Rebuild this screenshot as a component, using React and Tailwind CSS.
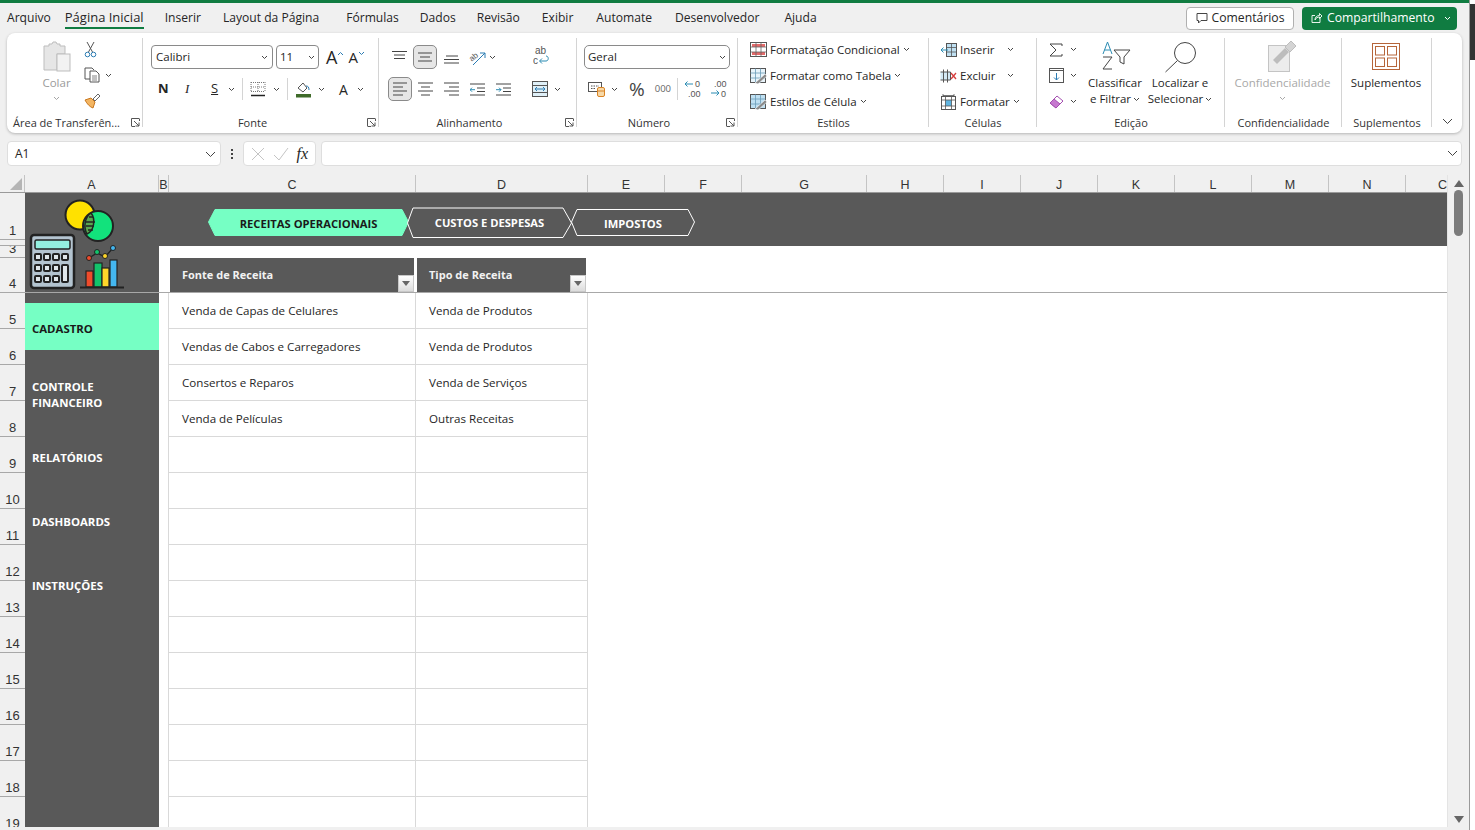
import React from 'react';

const tabs = [
  { label: 'Arquivo', cls: 'ml-[7px]' },
  { label: 'Página Inicial', cls: 'ml-[14px] text-[13px] font-medium border-b-2 border-[#107c41]' },
  { label: 'Inserir', cls: 'ml-[21px]' },
  { label: 'Layout da Página', cls: 'ml-[22px]' },
  { label: 'Fórmulas', cls: 'ml-[27px]' },
  { label: 'Dados', cls: 'ml-[21px]' },
  { label: 'Revisão', cls: 'ml-[21px]' },
  { label: 'Exibir', cls: 'ml-[22px]' },
  { label: 'Automate', cls: 'ml-[23px]' },
  { label: 'Desenvolvedor', cls: 'ml-[23px]' },
  { label: 'Ajuda', cls: 'ml-[25px]' },
];

const columns = [
  { label: 'A', cls: 'w-[134px]' },
  { label: 'B', cls: 'w-[10px]' },
  { label: 'C', cls: 'w-[247px]' },
  { label: 'D', cls: 'w-[172px]' },
  { label: 'E', cls: 'w-[77px]' },
  { label: 'F', cls: 'w-[77px]' },
  { label: 'G', cls: 'w-[125px]' },
  { label: 'H', cls: 'w-[77px]' },
  { label: 'I', cls: 'w-[77px]' },
  { label: 'J', cls: 'w-[77px]' },
  { label: 'K', cls: 'w-[77px]' },
  { label: 'L', cls: 'w-[77px]' },
  { label: 'M', cls: 'w-[77px]' },
  { label: 'N', cls: 'w-[77px]' },
  { label: 'C', cls: 'w-[41px] justify-end border-r-0' },
];

const rowHeaders = [
  { label: '1', cls: 'h-[47px]' },
  { label: '', cls: 'h-[6px]' },
  { label: '3', cls: 'h-[12px]' },
  { label: '4', cls: 'h-[35px]' },
  ...[5, 6, 7, 8, 9, 10, 11, 12, 13, 14, 15, 16, 17, 18, 19].map((n) => ({ label: String(n), cls: 'h-[36px]' })),
];

const rows = [
  ['Venda de Capas de Celulares', 'Venda de Produtos'],
  ['Vendas de Cabos e Carregadores', 'Venda de Produtos'],
  ['Consertos e Reparos', 'Venda de Serviços'],
  ['Venda de Películas', 'Outras Receitas'],
  ...Array.from({ length: 11 }, () => ['', '']),
];

function Chev({ className = '', color = '#444' }) {
  return (
    <svg width="7" height="5" viewBox="0 0 7 5" className={className}>
      <path d="M1 1l2.5 2.5L6 1" fill="none" stroke={color} strokeWidth="1" />
    </svg>
  );
}

function Lines({ rows: lineRows, color = '#444' }) {
  // small stacks of horizontal strokes, used by the alignment buttons
  return (
    <svg width="16" height="16" viewBox="0 0 16 16">
      {lineRows.map(([x1, x2, y], i) => (
        <path key={i} d={`M${x1} ${y}H${x2}`} stroke={color} strokeWidth="1" />
      ))}
    </svg>
  );
}

function Group({ label, cls, children, launcher, border = true }) {
  return (
    <div className={`relative h-full ${cls}`}>
      <div className="h-[80px]">{children}</div>
      <div className={`text-center text-[11px] leading-[20px] text-[#333] ${launcher ? 'pr-[17px]' : ''}`}>{label}</div>
      {launcher && (
        <svg width="9" height="9" viewBox="0 0 9 9" className="absolute right-[3px] bottom-[6px]">
          <path d="M.5 8V.5H8M3 3l5 5M4.5 8H8V4.5M.5 8.5H4M8.5.5V3" fill="none" stroke="#555" strokeWidth="1" />
        </svg>
      )}
      {border && <div className="absolute right-0 top-[5px] bottom-[6px] w-px bg-[#d4d4d4]" />}
    </div>
  );
}

function ClipboardIcon() {
  return (
    <svg width="28" height="31" viewBox="0 0 28 31">
      <path d="M1 5h5V3h3l1-2h3l1 2h3v2h5v8H14v16H1z" fill="#e6e6e6" stroke="#bdbdbd" />
      <rect x="14" y="13" width="13" height="17" fill="#f2f2f2" stroke="#bdbdbd" />
    </svg>
  );
}

function CutIcon() {
  return (
    <svg width="13" height="17" viewBox="0 0 13 17">
      <path d="M3 1l5.5 10M10 1L4.500 11" stroke="#555" fill="none" />
      <circle cx="3.500" cy="13.500" r="2.300" fill="none" stroke="#2b7cb3" />
      <circle cx="9.500" cy="13.500" r="2.300" fill="none" stroke="#2b7cb3" />
    </svg>
  );
}

function CopyIcon() {
  return (
    <svg width="17" height="16" viewBox="0 0 17 16">
      <path d="M6 12H1V1h7l2 2" fill="none" stroke="#555" />
      <path d="M6 4h6l3 3v8H6z" fill="#fff" stroke="#555" />
      <path d="M8 9h5M8 11h5M8 13h5" stroke="#666" strokeWidth=".8" />
    </svg>
  );
}

function PainterIcon() {
  return (
    <svg width="17" height="17" viewBox="0 0 17 17">
      <path d="M1 8l6-2 4 4-2 6C6 15 3 12 1 8z" fill="#f3b562" stroke="#c9771e" />
      <path d="M9 7l5-5 2 2-5 5z" fill="#fff" stroke="#666" />
    </svg>
  );
}

function BordersIcon() {
  return (
    <svg width="16" height="16" viewBox="0 0 16 16">
      <path d="M1 1.500h14M1 6h14M8 1v10M1 1v10M15 1v10" stroke="#777" strokeDasharray="1 1" fill="none" />
      <path d="M1 10.500h14" stroke="#777" strokeDasharray="1 1" />
      <path d="M1 14.500h14" stroke="#222" strokeWidth="1.500" />
    </svg>
  );
}

function FillIcon() {
  return (
    <svg width="17" height="17" viewBox="0 0 17 17">
      <path d="M3 7l5-5 4 5-4 4z" fill="#fff" stroke="#555" />
      <path d="M11 5c2 0 3 1 3 4" stroke="#2b7cb3" fill="none" />
      <rect x="1" y="13" width="15" height="3.500" fill="#3f6b2a" />
    </svg>
  );
}

function OrientIcon() {
  return (
    <svg width="20" height="17" viewBox="0 0 20 17" className="overflow-visible">
      <path d="M6 16L18 4M13 4h5v5" stroke="#2b7cb3" fill="none" />
      <text x="2" y="11" fontSize="8" fill="#555" fontFamily="Liberation Sans" transform="rotate(-40 6 8)">ab</text>
    </svg>
  );
}

function WrapIcon() {
  return (
    <svg width="17" height="20" viewBox="0 0 17 20" fontFamily="Liberation Sans">
      <text x="2" y="8" fontSize="10" fill="#555">ab</text>
      <text x="0" y="18" fontSize="10" fill="#555">c</text>
      <path d="M7 15h6c3 0 3-5 0-5M9 12.500L6.500 15 9 17.500" fill="none" stroke="#2b8cb3" />
    </svg>
  );
}

function MergeIcon() {
  return (
    <svg width="16" height="16" viewBox="0 0 16 16">
      <rect x=".5" y=".5" width="15" height="15" fill="#dff0f8" stroke="#555" />
      <path d="M.5 4.500h15M.5 11.500h15" stroke="#555" />
      <path d="M3 8h10M5 6L3 8l2 2M11 6l2 2-2 2" fill="none" stroke="#2b7cb3" />
    </svg>
  );
}

function IndentIcon({ flip }) {
  return (
    <svg width="15" height="13" viewBox="0 0 15 13">
      <path d="M0 1h15M7 5h8M7 8.500h8M0 12h15" stroke="#444" />
      <path d={flip ? 'M0 6.700h5M3 4.700l2 2-2 2' : 'M0 6.700h5M2 4.700l-2 2 2 2'} fill="none" stroke="#2b8cb3" />
    </svg>
  );
}

function AccountIcon() {
  return (
    <svg width="17" height="16" viewBox="0 0 17 16">
      <rect x=".5" y="1.500" width="13" height="9" fill="#fff" stroke="#555" />
      <path d="M3 5h8M3 7.500h5" stroke="#555" strokeDasharray="1.500 1" />
      <rect x="9.500" y="6.500" width="7" height="9" rx="1.500" fill="#f7d9a8" stroke="#d98324" />
      <path d="M9.500 10h7" stroke="#d98324" />
    </svg>
  );
}

function DecimalIcon({ more }) {
  return (
    <svg width="17" height="20" viewBox="0 0 17 20" fontFamily="Liberation Sans" fontSize="9" fill="#555">
      {more ? (
        <>
          <text x="4" y="8">.00</text>
          <text x="11" y="18">0</text>
          <path d="M1 14h8M6.500 11.500L9 14l-2.500 2.500" fill="none" stroke="#2b8cb3" />
        </>
      ) : (
        <>
          <text x="11" y="8">0</text>
          <text x="4" y="18">.00</text>
          <path d="M9 5H1M3.500 2.500L1 5l2.500 2.500" fill="none" stroke="#2b8cb3" />
        </>
      )}
    </svg>
  );
}

function CondIcon() {
  return (
    <svg width="17" height="15" viewBox="0 0 17 15">
      <rect x=".5" y=".5" width="16" height="14" fill="#fff" stroke="#555" />
      <rect x="2" y="2" width="13" height="3" fill="#e56a6a" />
      <rect x="2" y="10" width="13" height="3" fill="#e56a6a" />
      <path d="M.5 5h16M.5 10h16M6 .5v14M11 .5v14" stroke="#666" strokeWidth=".8" />
    </svg>
  );
}

function TableFmtIcon({ solid }) {
  return (
    <svg width="17" height="16" viewBox="0 0 17 16">
      <rect x=".5" y=".5" width="15" height="14" fill={solid ? '#bfe0f2' : '#e8f4fb'} stroke="#555" />
      <path d="M.5 5h15M.5 10h15M5.500 .5v14M10.500 .5v14" stroke="#6b9cb8" strokeWidth=".8" />
      <path d="M5 15l10-9 2 2-9 8z" fill="#8a8a8a" stroke="#fff" strokeWidth=".6" />
    </svg>
  );
}

function InsertIcon() {
  return (
    <svg width="17" height="14" viewBox="0 0 17 14">
      <rect x="6.500" y=".5" width="10" height="13" fill="#bfe0f2" stroke="#555" />
      <path d="M6.500 4.500h10M6.500 9h10M11.500 .5v13" stroke="#555" strokeWidth=".8" />
      <path d="M8 7H1M3.500 4.500L1 7l2.500 2.500" fill="none" stroke="#2b8cb3" />
    </svg>
  );
}

function DeleteIcon() {
  return (
    <svg width="17" height="14" viewBox="0 0 17 14">
      <path d="M.5 3h10v8H.5M3.500 .5v13M7.500 .5v13" fill="#d3e9f5" stroke="#555" />
      <path d="M11 4l5 6M16 4l-5 6" stroke="#d63c3c" strokeWidth="1.300" />
    </svg>
  );
}

function FormatIcon() {
  return (
    <svg width="17" height="17" viewBox="0 0 17 17">
      <rect x="1.500" y="3.500" width="14" height="13" fill="#fff" stroke="#555" />
      <rect x="5.500" y="7" width="6" height="6" fill="#5fb4e0" />
      <path d="M1.500 7h14M1.500 13h14M5.500 3.500v13M11.500 3.500v13" stroke="#555" strokeWidth=".8" />
      <path d="M3 2.500h11M3 1v3M14 1v3" stroke="#555" strokeWidth=".8" />
    </svg>
  );
}

function SumIcon() {
  return (
    <svg width="14" height="14" viewBox="0 0 14 14">
      <path d="M13 3V1H1l6 6-6 6h12v-2" fill="none" stroke="#444" />
    </svg>
  );
}

function FillDownIcon() {
  return (
    <svg width="15" height="15" viewBox="0 0 15 15">
      <rect x=".5" y=".5" width="14" height="14" fill="#fff" stroke="#555" />
      <path d="M.5 2.500h14" stroke="#555" />
      <path d="M7.500 5v7M5 9.500l2.500 2.500L10 9.500" fill="none" stroke="#2b7cb3" />
    </svg>
  );
}

function EraserIcon() {
  return (
    <svg width="15" height="15" viewBox="0 0 15 15">
      <path d="M1 9l7-7 6 5-7 7z" fill="#fff" stroke="#a44fb0" />
      <path d="M1 9l4-4 6 5-4 4z" fill="#c678cf" stroke="#a44fb0" />
    </svg>
  );
}

function SortIcon() {
  return (
    <svg width="31" height="29" viewBox="0 0 31 29">
      <path d="M3 13L7.500 1 12 13M4.500 9h6" fill="none" stroke="#2b8cb3" />
      <path d="M3 16h9L3 28h9" fill="none" stroke="#444" />
      <path d="M14 9h16l-6 7v7l-4-2v-5z" fill="none" stroke="#444" />
    </svg>
  );
}

function SearchIcon() {
  return (
    <svg width="33" height="32" viewBox="0 0 33 32">
      <circle cx="21" cy="12" r="10.500" fill="none" stroke="#444" />
      <path d="M13.500 19.500L1.500 31" stroke="#444" />
    </svg>
  );
}

function SensitivityIcon() {
  return (
    <svg width="29" height="32" viewBox="0 0 29 32">
      <rect x=".5" y="5.500" width="21" height="26" fill="#ececec" stroke="#c4c4c4" />
      <path d="M5 20L17 8l4 4L9 24z" fill="#bdbdbd" />
      <path d="M17 7l6-6 5 5-6 6z" fill="#d4d4d4" stroke="#bdbdbd" />
    </svg>
  );
}

function AddinIcon() {
  return (
    <svg width="28" height="27" viewBox="0 0 28 27">
      <rect x=".5" y=".5" width="27" height="26" fill="#fff" stroke="#b5653a" />
      <rect x="3.500" y="3.500" width="9" height="8.500" fill="none" stroke="#b5653a" />
      <rect x="15.500" y="3.500" width="9" height="8.500" fill="none" stroke="#b5653a" />
      <rect x="3.500" y="15" width="9" height="8.500" fill="none" stroke="#b5653a" />
      <rect x="15.500" y="15" width="9" height="8.500" fill="none" stroke="#b5653a" />
    </svg>
  );
}

function Logo() {
  return (
    <svg width="105" height="100" viewBox="25 195 105 100">
      <circle cx="80" cy="215" r="14.500" fill="#ffe100" stroke="#222" strokeWidth="2" />
      <circle cx="98" cy="226" r="15" fill="#12e27c" stroke="#222" strokeWidth="2" />
      <path d="M91 213c-6 4-8 14-4 21 7-3 9-15 4-21z" fill="#5aa650" stroke="#222" strokeWidth="1.500" />
      <path d="M86 222h9M86 226h8M88 230h5M89 217h4" stroke="#222" strokeWidth="1.300" />
      <rect x="31" y="235" width="43" height="53" rx="3" fill="#b4c4d0" stroke="#222" strokeWidth="2.500" />
      <rect x="35" y="240" width="35" height="9" rx="1.500" fill="#93efe0" stroke="#222" strokeWidth="1.500" />
      {[254, 265, 276].map((y) =>
        [35, 44, 53].map((x) => <rect key={`${x}-${y}`} x={x} y={y} width="6" height="6" rx="1" fill="#dfe6ea" stroke="#222" strokeWidth="2" />),
      )}
      <rect x="62" y="254" width="6" height="6" rx="1" fill="#dfe6ea" stroke="#222" strokeWidth="2" />
      <rect x="62" y="265" width="6" height="17" rx="1" fill="#dfe6ea" stroke="#222" strokeWidth="2" />
      <rect x="86" y="271" width="7" height="16" fill="#ee4b2b" stroke="#222" strokeWidth="1.200" />
      <rect x="94" y="263" width="8" height="24" fill="#12c46b" stroke="#222" strokeWidth="1.200" />
      <rect x="102" y="268" width="7" height="19" fill="#ffd62a" stroke="#222" strokeWidth="1.200" />
      <rect x="110" y="260" width="7" height="27" fill="#44b7f0" stroke="#222" strokeWidth="1.200" />
      <path d="M80 287.500h44" stroke="#222" strokeWidth="2" />
      <path d="M89 258l8-5 8 4 8-9" fill="none" stroke="#222" strokeWidth="1.300" />
      <circle cx="89" cy="258" r="2.500" fill="#ee4b2b" stroke="#222" />
      <circle cx="97" cy="252" r="2.500" fill="#12c46b" stroke="#222" />
      <circle cx="105" cy="256" r="2.500" fill="#ffd62a" stroke="#222" />
      <circle cx="113" cy="248" r="2.500" fill="#44b7f0" stroke="#222" />
    </svg>
  );
}

function ChevronTab({ cls, label, active, points, viewBox, width, height }) {
  return (
    <div className={`relative flex items-center justify-center ${cls}`}>
      <svg width={width} height={height} viewBox={viewBox} className="absolute left-0 top-0">
        <polygon points={points} fill={active ? '#76ffc4' : '#595959'} stroke={active ? '#76ffc4' : '#fff'} />
      </svg>
      <span className={`relative text-[11.2px] font-bold ${active ? 'text-[#1a1a1a]' : 'text-white'}`}>{label}</span>
    </div>
  );
}

function FilterButton() {
  return (
    <div className="absolute right-0 bottom-0 flex h-[17px] w-[16px] items-center justify-center border border-[#c8c8c8] bg-gradient-to-b from-white to-[#dcdcdc]">
      <svg width="8" height="5" viewBox="0 0 8 5">
        <path d="M0 0h8L4 5z" fill="#666" />
      </svg>
    </div>
  );
}

export default function App() {
  return (
    <div className="flex h-[830px] w-[1475px] overflow-hidden bg-[#f0f0f0] font-['Open_Sans',sans-serif] text-[#262626]">
      <div className="flex h-full w-[1470px] flex-col border-r border-[#9a9a9a]">
        <div className="h-[3px] bg-[#107c41]" />

        {/* tab row */}
        <div className="flex h-[30px] items-center text-[12.1px]">
          {tabs.map((tab) => (
            <div key={tab.label} className={`leading-[20px] ${tab.cls}`}>{tab.label}</div>
          ))}
          <div className="ml-auto flex items-center gap-[8px] pr-[12px] text-[12.2px]">
            <div className="flex h-[23px] w-[108px] items-center justify-center gap-[4px] rounded-[4px] border border-[#b0b0b0] bg-white">
              <svg width="12" height="12" viewBox="0 0 12 12">
                <path d="M1 1.500h10v7H5L2.500 11V8.500H1z" fill="none" stroke="#444" />
              </svg>
              Comentários
            </div>
            <div className="flex h-[23px] w-[155px] items-center gap-[4px] rounded-[4px] bg-[#107c41] pl-[9px] text-white">
              <svg width="12" height="12" viewBox="0 0 12 12">
                <path d="M9 5.500v5H1v-7h3M4 8c0-3 2-4.500 4.500-4.500V1.500L11 4 8.500 6.500V5C6.500 5 5 6 4 8z" fill="none" stroke="#fff" strokeWidth=".9" />
              </svg>
              Compartilhamento
              <Chev className="ml-auto mr-[6px]" color="#fff" />
            </div>
          </div>
        </div>

        {/* ribbon */}
        <div className="ml-[7px] flex h-[100px] w-[1455px] rounded-lg bg-white shadow-[0_1px_3px_rgba(0,0,0,0.25)]">
          <Group label="Área de Transferên..." cls="w-[136px]" launcher>
            <div className="flex pl-[29px] pt-[8px]">
              <div className="flex w-[41px] flex-col items-center">
                <ClipboardIcon />
                <span className="mt-[2px] text-[11.5px] text-[#9b9b9b]">Colar</span>
                <Chev className="mt-[5px]" color="#a5a5a5" />
              </div>
              <div className="ml-[7px] flex flex-col gap-[9px]">
                <CutIcon />
                <div className="flex items-center gap-[4px]"><CopyIcon /><Chev /></div>
                <PainterIcon />
              </div>
            </div>
          </Group>

          <Group label="Fonte" cls="w-[236px]" launcher>
            <div className="flex items-center pl-[8px] pt-[12px]">
              <div className="flex h-[24px] w-[122px] items-center justify-between rounded-[4px] border border-[#8a8a8a] px-[4px] text-[11.5px]">Calibri<Chev /></div>
              <div className="ml-[3px] flex h-[24px] w-[43px] items-center justify-between rounded-[4px] border border-[#8a8a8a] px-[3px] text-[11.5px]">11<Chev /></div>
              <span className="ml-[7px] text-[18px] leading-none">A</span>
              <Chev className="-mt-[8px] rotate-180" color="#2b7cb3" />
              <span className="ml-[4px] text-[15px] leading-none">A</span>
              <Chev className="-mt-[8px]" color="#2b7cb3" />
            </div>
            <div className="mt-[9px] flex h-[22px] items-center text-[13px]">
              <span className="ml-[15px] w-[27px] font-bold">N</span>
              <span className="w-[26px] font-['Liberation_Serif',serif] italic">I</span>
              <span className="w-[17px] underline">S</span>
              <Chev />
              <div className="mx-[7px] h-[22px] w-px bg-[#d4d4d4]" />
              <BordersIcon />
              <Chev className="ml-[7px]" />
              <div className="mx-[7px] h-[22px] w-px bg-[#d4d4d4]" />
              <FillIcon />
              <Chev className="ml-[6px]" />
              <span className="ml-[14px] text-[14px]">A</span>
              <Chev className="ml-[9px]" />
            </div>
          </Group>

          <Group label="Alinhamento" cls="w-[198px]" launcher>
            <div className="flex items-center pl-[9px] pt-[12px]">
              <div className="flex h-[24px] w-[24px] items-center justify-center"><Lines rows={[[0, 15, 2.5], [2, 13, 6], [2, 13, 9.5]]} /></div>
              <div className="ml-[1px] flex h-[24px] w-[24px] items-center justify-center rounded-[5px] border border-[#8a8a8a] bg-[#e6e6e6]"><Lines rows={[[1, 15, 4], [3, 13, 8], [1, 15, 12]]} /></div>
              <div className="ml-[3px] flex h-[24px] w-[24px] items-center justify-center"><Lines rows={[[2, 14, 7], [0, 15, 10.5], [0, 15, 14]]} /></div>
              <div className="ml-[3px]"><OrientIcon /></div>
              <Chev className="ml-[2px]" />
              <div className="ml-[37px] -mt-[2px]"><WrapIcon /></div>
            </div>
            <div className="mt-[8px] flex items-center pl-[9px]">
              <div className="flex h-[24px] w-[24px] items-center justify-center rounded-[5px] border border-[#8a8a8a] bg-[#e6e6e6]"><Lines rows={[[1, 15, 2], [1, 11, 6], [1, 15, 10], [1, 11, 14]]} /></div>
              <div className="ml-[6px]"><Lines rows={[[0, 15, 2], [3, 12, 6], [0, 15, 10], [3, 12, 14]]} /></div>
              <div className="ml-[10px]"><Lines rows={[[0, 15, 2], [5, 15, 6], [0, 15, 10], [5, 15, 14]]} /></div>
              <div className="ml-[10px]"><IndentIcon /></div>
              <div className="ml-[11px]"><IndentIcon flip /></div>
              <div className="ml-[21px]"><MergeIcon /></div>
              <Chev className="ml-[6px]" />
            </div>
          </Group>

          <Group label="Número" cls="w-[161px]" launcher>
            <div className="pl-[7px] pt-[12px]">
              <div className="flex h-[24px] w-[146px] items-center justify-between rounded-[5px] border border-[#8a8a8a] px-[3px] text-[11.5px]">Geral<Chev /></div>
            </div>
            <div className="mt-[9px] flex h-[22px] items-center pl-[11px]">
              <AccountIcon />
              <Chev className="ml-[6px]" />
              <span className="ml-[11px] text-[19px] leading-none text-[#444]">%</span>
              <span className="ml-[10px] text-[9.5px] text-[#666]">000</span>
              <div className="ml-[6px] h-[22px] w-px bg-[#d4d4d4]" />
              <div className="ml-[6px]"><DecimalIcon /></div>
              <div className="ml-[9px]"><DecimalIcon more /></div>
            </div>
          </Group>

          <Group label="Estilos" cls="w-[191px]">
            <div className="flex flex-col gap-[9px] pl-[12px] pt-[8px] text-[11.5px]">
              <div className="flex h-[17px] items-center gap-[3px]"><CondIcon />Formatação Condicional<Chev /></div>
              <div className="flex h-[17px] items-center gap-[3px]"><TableFmtIcon />Formatar como Tabela<Chev /></div>
              <div className="flex h-[17px] items-center gap-[3px]"><TableFmtIcon solid />Estilos de Célula<Chev /></div>
            </div>
          </Group>

          <Group label="Células" cls="w-[108px]">
            <div className="flex flex-col gap-[9px] pl-[11px] pt-[8px] text-[11.5px]">
              <div className="flex h-[17px] items-center gap-[3px]"><InsertIcon />Inserir<Chev className="ml-[9px]" /></div>
              <div className="flex h-[17px] items-center gap-[3px]"><DeleteIcon />Excluir<Chev className="ml-[9px]" /></div>
              <div className="flex h-[17px] items-center gap-[3px]"><FormatIcon />Formatar<Chev /></div>
            </div>
          </Group>

          <Group label="Edição" cls="w-[188px]">
            <div className="flex pl-[12px] pt-[8px] text-[11.5px] leading-[16px]">
              <div className="flex w-[34px] flex-col gap-[9px]">
                <div className="flex h-[17px] items-center gap-[7px]"><SumIcon /><Chev /></div>
                <div className="flex h-[17px] items-center gap-[6px]"><FillDownIcon /><Chev /></div>
                <div className="flex h-[17px] items-center gap-[6px]"><EraserIcon /><Chev /></div>
              </div>
              <div className="flex w-[64px] flex-col items-center">
                <SortIcon />
                <span className="mt-[5px]">Classificar</span>
                <span className="flex items-center gap-[2px]">e Filtrar<Chev /></span>
              </div>
              <div className="flex w-[66px] flex-col items-center">
                <SearchIcon />
                <span className="mt-[2px]">Localizar e</span>
                <span className="flex items-center gap-[2px]">Selecionar<Chev /></span>
              </div>
            </div>
          </Group>

          <Group label="Confidencialidade" cls="w-[117px]">
            <div className="flex flex-col items-center pt-[7px] pr-[2px] text-[11.5px] text-[#a8a8a8]">
              <SensitivityIcon />
              <span className="mt-[3px] leading-[16px]">Confidencialidade</span>
              <Chev className="mt-[5px]" color="#a8a8a8" />
            </div>
          </Group>

          <Group label="Suplementos" cls="w-[90px]">
            <div className="flex flex-col items-center pt-[10px] pr-[2px] text-[11.5px]">
              <AddinIcon />
              <span className="mt-[5px] leading-[16px]">Suplementos</span>
            </div>
          </Group>

          <div className="flex flex-1 items-end justify-center pb-[8px]">
            <svg width="11" height="7" viewBox="0 0 11 7">
              <path d="M1 1l4.500 4.500L10 1" fill="none" stroke="#444" />
            </svg>
          </div>
        </div>

        {/* formula bar */}
        <div className="ml-[7px] mt-[8px] flex h-[25px] items-center">
          <div className="flex h-full w-[214px] items-center justify-between rounded-[4px] border border-[#dedede] bg-white pl-[7px] pr-[4px] pt-[1px] text-[12px]">
            A1
            <svg width="11" height="7" viewBox="0 0 11 7"><path d="M1 1l4.500 4.500L10 1" fill="none" stroke="#444" /></svg>
          </div>
          <div className="flex w-[22px] flex-col items-center gap-[2px]">
            <span className="h-[2px] w-[2px] bg-[#444]" />
            <span className="h-[2px] w-[2px] bg-[#444]" />
            <span className="h-[2px] w-[2px] bg-[#444]" />
          </div>
          <div className="flex h-full w-[73px] items-center justify-around rounded-[4px] border border-[#dedede] bg-white px-[3px]">
            <svg width="14" height="14" viewBox="0 0 14 14"><path d="M1 1l12 12M13 1L1 13" stroke="#c4c4c4" /></svg>
            <svg width="16" height="14" viewBox="0 0 16 14"><path d="M1 8l5 5L15 1" fill="none" stroke="#c4c4c4" /></svg>
            <span className="font-['Liberation_Serif',serif] text-[16px] italic leading-none">fx</span>
          </div>
          <div className="ml-[5px] flex h-full w-[1141px] items-center justify-end rounded-[4px] border border-[#dedede] bg-white pr-[3px]">
            <svg width="11" height="7" viewBox="0 0 11 7"><path d="M1 1l4.500 4.500L10 1" fill="none" stroke="#444" /></svg>
          </div>
        </div>

        {/* sheet */}
        <div className="mt-[9px] flex h-[652px] flex-col overflow-hidden">
          <div className="flex h-[17px] shrink-0 font-['Liberation_Sans',sans-serif] text-[12.5px] text-[#333]">
            <div className="flex w-[25px] items-end justify-end border-r border-[#c4c4c4] pb-[2px] pr-[2px]">
              <svg width="12" height="12" viewBox="0 0 12 12"><path d="M12 0v12H0z" fill="#b5b5b5" /></svg>
            </div>
            {columns.map((col, i) => (
              <div key={i} className={`flex items-center justify-center border-r border-[#c4c4c4] pt-[3px] ${col.cls}`}>{col.label}</div>
            ))}
          </div>

          <div className="relative flex h-[635px] border-t border-[#9a9a9a]">
            <div className="w-[25px] shrink-0 overflow-hidden font-['Liberation_Sans',sans-serif] text-[13px] leading-[15px] text-[#333]">
              {rowHeaders.map((row, i) => (
                <div key={i} className={`flex items-end justify-center overflow-hidden border-b border-[#a8a8a8] pb-[1px] ${row.cls}`}>{row.label}</div>
              ))}
            </div>

            {/* nav column */}
            <div className="flex w-[134px] shrink-0 flex-col bg-[#595959] text-[11.4px] font-bold text-white">
              <div className="h-[110px] shrink-0 pt-[2px]"><Logo /></div>
              <div className="flex h-[47px] items-center bg-[#76ffc4] pl-[7px] pt-[4px] text-[#1a1a1a]">CADASTRO</div>
              <div className="mt-[29px] pl-[7px] leading-[16px]">CONTROLE<br />FINANCEIRO</div>
              <div className="mt-[39px] pl-[7px] leading-[16px]">RELATÓRIOS</div>
              <div className="mt-[48px] pl-[7px] leading-[16px]">DASHBOARDS</div>
              <div className="mt-[48px] pl-[7px] leading-[16px]">INSTRUÇÕES</div>
            </div>

            <div className="flex w-[1288px] shrink-0 flex-col bg-white">
              <div className="flex h-[53px] shrink-0 bg-[#595959] pt-[14px]">
                <ChevronTab cls="ml-[49px] h-[30px] w-[201px] pt-[4px]" label="RECEITAS OPERACIONAIS" active width={201} height={30} viewBox="0 0 201 30" points="0.5,15 7,2.500 194,2.500 200.500,15 194,28.500 7,28.500" />
                <ChevronTab cls="-ml-[2px] h-[32px] w-[165px]" label="CUSTOS E DESPESAS" width={165} height={32} viewBox="0 0 165 32" points="0.500,16 6,1 156,1 164.500,16 156,30.500 6,30.500" />
                <ChevronTab cls="-ml-[1px] h-[30px] w-[124px] pt-[4px]" label="IMPOSTOS" width={124} height={30} viewBox="0 0 124 30" points="0.500,15 6,2.500 117,2.500 123.500,15 117,28.500 6,28.500" />
              </div>

              <div className="ml-[9px] w-[420px] text-[11.6px]">
                <div className="mt-[12px] flex h-[34px] gap-[3px] pl-[2px] text-[11px] font-bold text-[#f2f2f2]">
                  <div className="relative flex w-[244px] items-center bg-[#595959] pl-[12px]">Fonte de Receita<FilterButton /></div>
                  <div className="relative flex w-[169px] items-center bg-[#595959] pl-[12px]">Tipo de Receita<FilterButton /></div>
                </div>
                <div className="mt-[1px] border-l border-[#d9d9d9]">
                  {rows.map((row, i) => (
                    <div key={i} className="flex h-[36px] border-b border-[#d9d9d9]">
                      <div className="flex w-[247px] items-center border-r border-[#d9d9d9] pl-[13px] pt-[1px]">{row[0]}</div>
                      <div className="flex w-[172px] items-center border-r border-[#d9d9d9] pl-[13px] pt-[1px]">{row[1]}</div>
                    </div>
                  ))}
                </div>
              </div>
            </div>

            {/* frozen pane line */}
            <div className="absolute left-0 right-0 top-[99px] h-px bg-[#a8a8a8]" />

            {/* scrollbar */}
            <div className="absolute -top-[18px] bottom-0 left-[1447px] flex w-[22px] flex-col items-center justify-between border-l border-[#e4e4e4] bg-[#f0f0f0] pb-[4px] pt-[5px]">
              <div className="flex flex-col items-center gap-[3px]">
                <svg width="10" height="7" viewBox="0 0 10 7"><path d="M5 0l5 7H0z" fill="#666" /></svg>
                <div className="h-[46px] w-[9px] rounded-full bg-[#7c7c7c]" />
              </div>
              <svg width="10" height="7" viewBox="0 0 10 7"><path d="M5 7L0 0h10z" fill="#666" /></svg>
            </div>
          </div>
        </div>
      </div>

      {/* sliver of the window behind */}
      <div className="w-[5px] bg-white pt-[4px]">
        <div className="h-[56px] bg-[#333]" />
      </div>
    </div>
  );
}
